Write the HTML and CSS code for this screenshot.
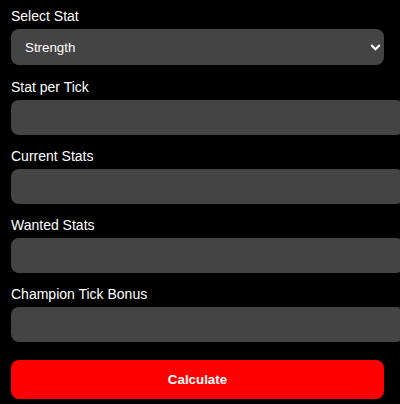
FILE: index.html
```html
<!DOCTYPE html>
<html>
<head>
<meta charset="utf-8">
<link rel="stylesheet" href="styles.css">
</head>
<body>
<div class="calc">
  <label class="field-label" for="stat">Select Stat</label>
  <select id="stat" class="field-select">
    <option>Strength</option>
    <option>Speed</option>
    <option>Defense</option>
    <option>Dexterity</option>
  </select>

  <label class="field-label" for="spt">Stat per Tick</label>
  <input id="spt" class="field-input" type="number">

  <label class="field-label" for="cur">Current Stats</label>
  <input id="cur" class="field-input" type="number">

  <label class="field-label" for="want">Wanted Stats</label>
  <input id="want" class="field-input" type="number">

  <label class="field-label" for="bonus">Champion Tick Bonus</label>
  <input id="bonus" class="field-input" type="number">

  <button class="calc-btn" type="button">Calculate</button>
</div>
</body>
</html>
```
FILE: styles.css
```css
html, body {
  margin: 0;
  background: #000;
  overflow: hidden;
}
body {
  font-family: "Liberation Sans", Arial, sans-serif;
  color: #fff;
}
.calc {
  padding: 8px 16px 0 11px;
  width: 373px;
}
.field-label {
  display: block;
  font-size: 14px;
  line-height: 16px;
  margin-bottom: 5px;
}
.field-select {
  display: block;
  width: 373px;
  height: 36px;
  padding: 0 6px;
  margin: 0 0 14px 0;
  border: none;
  border-radius: 8px;
  background: #444;
  color: #fff;
  font-family: "Liberation Sans", Arial, sans-serif;
  font-size: 13.333px;
  appearance: none;
  -webkit-appearance: none;
  background-image: url("data:image/svg+xml;utf8,<svg xmlns='http://www.w3.org/2000/svg' width='12' height='8' viewBox='0 0 12 8'><path d='M2 2 L6 6 L10 2' fill='none' stroke='white' stroke-width='2.4' stroke-linecap='square'/></svg>");
  background-repeat: no-repeat;
  background-position: right 3px center;
  background-size: 11px 7px;
  padding-left: 14px;
  outline: none;
}
.field-input {
  display: block;
  box-sizing: content-box;
  width: 373px;
  height: 15px;
  padding: 10px;
  margin: 0 0 13px 0;
  border: none;
  border-radius: 8px;
  background: #444;
  color: #fff;
  font-family: "Liberation Sans", Arial, sans-serif;
  font-size: 13.333px;
  outline: none;
}
.calc-btn {
  display: block;
  width: 373px;
  height: 39px;
  margin-top: 18px;
  border: none;
  border-radius: 8px;
  background: #f00;
  color: #fff;
  font-family: "Liberation Sans", Arial, sans-serif;
  font-size: 13.333px;
  font-weight: bold;
  cursor: pointer;
}
```
